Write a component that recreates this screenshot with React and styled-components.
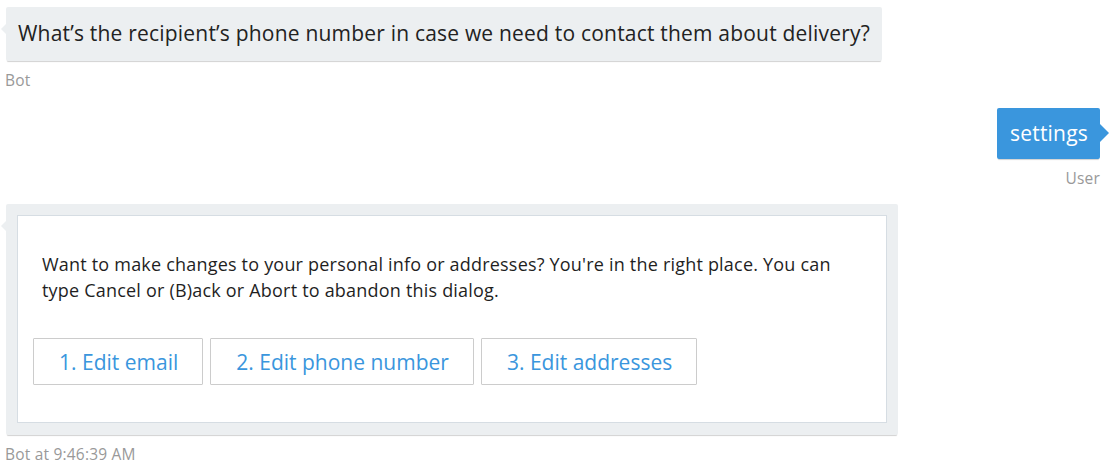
import React from 'react';
import styled, { createGlobalStyle, css } from 'styled-components';

const GlobalStyle = createGlobalStyle`
  html, body {
    margin: 0;
    padding: 0;
    background: #fff;
  }
  body {
    font-family: 'Open Sans', 'Noto Sans', sans-serif;
  }
`;

const Chat = styled.div`
  width: 1113px;
  height: 476px;
  box-sizing: border-box;
  padding: 7px 13px 0 5px;
  display: flex;
  flex-direction: column;
  overflow: hidden;
`;

const Group = styled.div`
  display: flex;
  flex-direction: column;
  align-items: ${p => (p.$me ? 'flex-end' : 'flex-start')};
  margin-bottom: ${p => p.$gap || 0}px;
`;

const Bubble = styled.div`
  position: relative;
  border-radius: 2px;
  box-shadow: 0 2px 1px -1px rgba(0, 0, 0, 0.18);
  ${p =>
    p.$me
      ? css`
          background: #3a96dd;
          color: #fff;
          padding: 10px 12px 11px 13px;
        `
      : css`
          background: #eceff1;
          color: #222;
          padding: 11px 12px 13px;
          margin-left: 1px;
        `}

  &::before {
    content: '';
    position: absolute;
    top: ${p => (p.$me ? 16 : 17)}px;
    ${p =>
      p.$me
        ? css`
            right: -9px;
            border-top: 9px solid transparent;
            border-bottom: 9px solid transparent;
            border-left: 9px solid #3a96dd;
          `
        : css`
            left: -5px;
            border-top: 5px solid transparent;
            border-bottom: 5px solid transparent;
            border-right: 5px solid #eceff1;
          `}
  }
`;

const BubbleText = styled.div`
  font-size: 21px;
  line-height: 30px;
  white-space: nowrap;
  letter-spacing: 0.2px;
`;

const Meta = styled.div`
  font-size: 15.5px;
  color: #999;
  margin-top: 9px;
  line-height: 20px;
  letter-spacing: 0.2px;
`;

const CardBubble = styled(Bubble)`
  padding: 11px 11px 12px 11px;
  width: 892px;
  box-sizing: border-box;
`;

const Card = styled.div`
  background: #fff;
  border: 1px solid #d6dde3;
  padding: 35px 16px 37px 15px;
`;

const CardText = styled.p`
  margin: 0 0 35px 9px;
  font-size: 18px;
  line-height: 26px;
  color: #1f1f1f;
  letter-spacing: 0.2px;
`;

const Actions = styled.div`
  display: flex;
  gap: 7px;
`;

const ActionButton = styled.button`
  background: #fff;
  border: 1px solid #ccc;
  border-radius: 1px;
  height: 47px;
  padding: 0 24px 0 25px;
  font-family: inherit;
  font-size: 21px;
  color: #3a96dd;
  letter-spacing: 0;
  cursor: pointer;
`;

const App = () => (
  <>
    <GlobalStyle />
    <Chat>
      <Group $gap={18}>
        <Bubble>
          <BubbleText>What’s the recipient’s phone number in case we need to contact them about delivery?</BubbleText>
        </Bubble>
        <Meta>Bot</Meta>
      </Group>
      <Group $me $gap={16}>
        <Bubble $me>
          <BubbleText>settings</BubbleText>
        </Bubble>
        <Meta>User</Meta>
      </Group>
      <Group>
        <CardBubble>
          <Card>
            <CardText>
              Want to make changes to your personal info or addresses? You're in the right place. You can
              <br />
              type Cancel or (B)ack or Abort to abandon this dialog.
            </CardText>
            <Actions>
              <ActionButton>1. Edit email</ActionButton>
              <ActionButton>2. Edit phone number</ActionButton>
              <ActionButton>3. Edit addresses</ActionButton>
            </Actions>
          </Card>
        </CardBubble>
        <Meta>Bot at 9:46:39 AM</Meta>
      </Group>
    </Chat>
  </>
);

export default App;
